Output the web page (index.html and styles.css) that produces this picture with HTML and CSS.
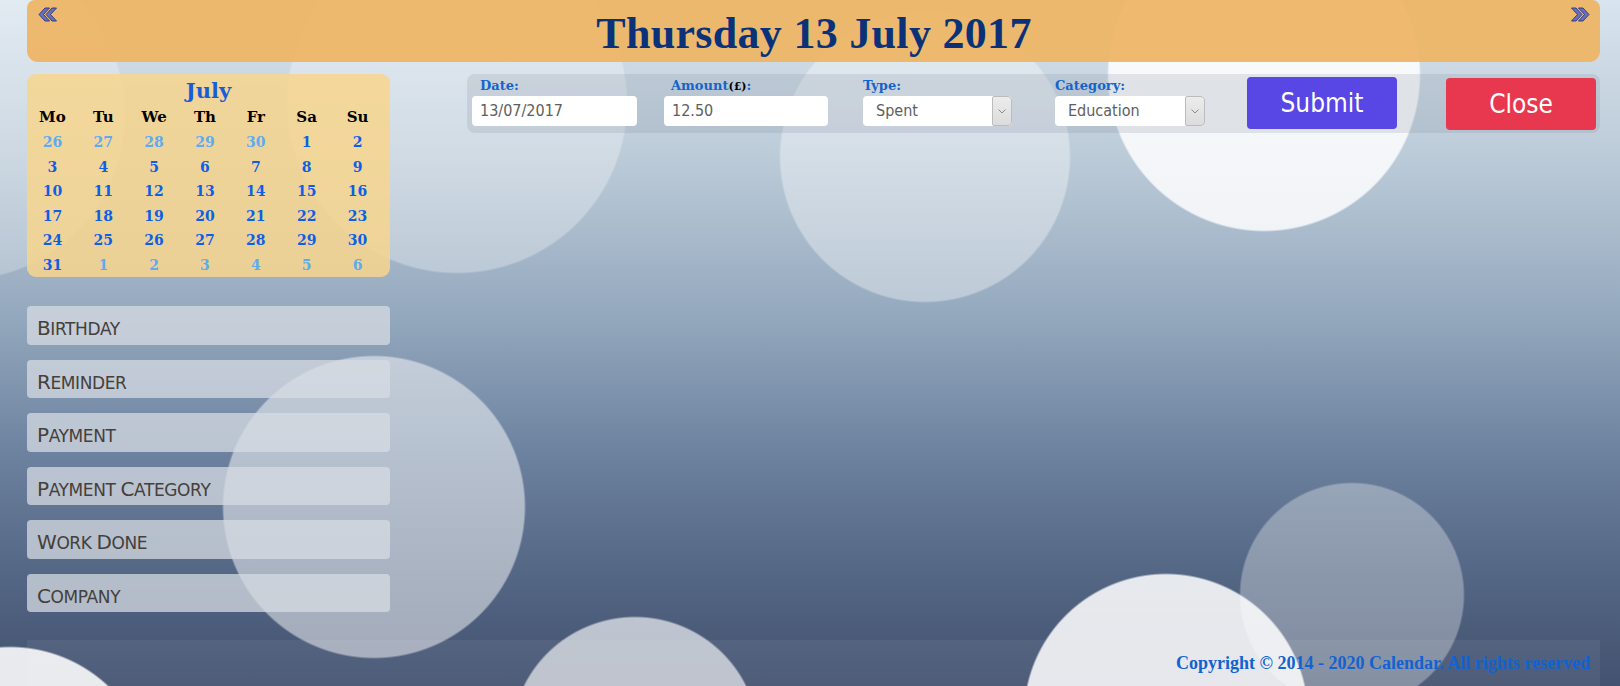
FILE: index.html
```html
<!DOCTYPE html>
<html lang="en">
<head>
<meta charset="utf-8">
<title>Calendar</title>
<link rel="stylesheet" href="styles.css">
</head>
<body>
<div class="page">
  <header class="topbar">
    <a class="nav" href="#" aria-label="Previous day">
      <svg width="20" height="16" viewBox="0 0 20 16"><path d="M1 7.5 L7 1 L11.5 1 L5.5 7.5 L11.5 14 L7 14 Z M8 7.5 L14 1 L18.5 1 L12.5 7.5 L18.5 14 L14 14 Z" fill="#6670c0" stroke="#2c3374" stroke-width="0.9" stroke-linejoin="round"/></svg>
    </a>
    <h1 class="title">Thursday 13 July 2017</h1>
    <a class="nav" href="#" aria-label="Next day">
      <svg width="20" height="16" viewBox="0 0 20 16"><path d="M19 7.5 L13 1 L8.5 1 L14.5 7.5 L8.5 14 L13 14 Z M12 7.5 L6 1 L1.5 1 L7.5 7.5 L1.5 14 L6 14 Z" fill="#6670c0" stroke="#2c3374" stroke-width="0.9" stroke-linejoin="round"/></svg>
    </a>
  </header>

  <div class="content">
    <aside class="sidebar">
      <div class="calendar">
        <div class="month">July</div>
        <table class="cal">
          <thead>
            <tr><th>Mo</th><th>Tu</th><th>We</th><th>Th</th><th>Fr</th><th>Sa</th><th>Su</th></tr>
          </thead>
          <tbody>
            <tr><td class="other">26</td><td class="other">27</td><td class="other">28</td><td class="other">29</td><td class="other">30</td><td>1</td><td>2</td></tr>
            <tr><td>3</td><td>4</td><td>5</td><td>6</td><td>7</td><td>8</td><td>9</td></tr>
            <tr><td>10</td><td>11</td><td>12</td><td>13</td><td>14</td><td>15</td><td>16</td></tr>
            <tr><td>17</td><td>18</td><td>19</td><td>20</td><td>21</td><td>22</td><td>23</td></tr>
            <tr><td>24</td><td>25</td><td>26</td><td>27</td><td>28</td><td>29</td><td>30</td></tr>
            <tr><td>31</td><td class="other">1</td><td class="other">2</td><td class="other">3</td><td class="other">4</td><td class="other">5</td><td class="other">6</td></tr>
          </tbody>
        </table>
      </div>

      <nav class="menu">
        <a class="menu-item" href="#"><span class="ini">B</span>irthday</a>
        <a class="menu-item" href="#"><span class="ini">R</span>eminder</a>
        <a class="menu-item" href="#"><span class="ini">P</span>ayment</a>
        <a class="menu-item" href="#"><span class="ini">P</span>ayment <span class="ini">C</span>ategory</a>
        <a class="menu-item" href="#"><span class="ini">W</span>ork <span class="ini">D</span>one</a>
        <a class="menu-item" href="#"><span class="ini">C</span>ompany</a>
      </nav>
    </aside>

    <main class="main">
      <form class="entry">
        <div class="field f-date">
          <label class="lbl lbl-date">Date:</label>
          <div class="input">13/07/2017</div>
        </div>
        <div class="field f-amount">
          <label class="lbl lbl-amount">Amount<span class="cur">(£)</span>:</label>
          <div class="input">12.50</div>
        </div>
        <div class="field f-type">
          <label class="lbl">Type:</label>
          <div class="select">
            <span class="sel-val">Spent</span>
            <span class="sel-btn"><svg width="8" height="5" viewBox="0 0 8 5"><path d="M0.5 0.5 L4 4 L7.5 0.5" fill="none" stroke="#8a8a8a" stroke-width="1"/></svg></span>
          </div>
        </div>
        <div class="field f-cat">
          <label class="lbl">Category:</label>
          <div class="select">
            <span class="sel-val">Education</span>
            <span class="sel-btn"><svg width="8" height="5" viewBox="0 0 8 5"><path d="M0.5 0.5 L4 4 L7.5 0.5" fill="none" stroke="#8a8a8a" stroke-width="1"/></svg></span>
          </div>
        </div>
        <div class="field f-submit">
          <button type="button" class="btn btn-submit">Submit</button>
        </div>
        <div class="field f-close">
          <button type="button" class="btn btn-close">Close</button>
        </div>
      </form>
    </main>
  </div>

  <footer class="footer">Copyright © 2014 - 2020 Calendar. All rights reserved</footer>
</div>
</body>
</html>
```

FILE: styles.css
```css
* { box-sizing: border-box; }

html, body { margin: 0; padding: 0; }

body {
  width: 1620px;
  height: 686px;
  overflow: hidden;
  font-family: "Liberation Serif", serif;
  background:
    radial-gradient(circle at 1264px 75px, rgba(255,255,255,.84) 155px, rgba(255,255,255,0) 157px),
    radial-gradient(circle at 1166px 716px, rgba(255,255,255,.86) 141px, rgba(255,255,255,0) 143px),
    radial-gradient(circle at 10px 790px, rgba(255,255,255,.88) 142px, rgba(255,255,255,0) 144px),
    radial-gradient(circle at 635px 741px, rgba(255,255,255,.64) 123px, rgba(255,255,255,0) 125px),
    radial-gradient(circle at 374px 507px, rgba(255,255,255,.5) 150px, rgba(255,255,255,0) 152px),
    radial-gradient(circle at 1352px 595px, rgba(255,255,255,.32) 111px, rgba(255,255,255,0) 113px),
    radial-gradient(circle at 925px 157px, rgba(255,255,255,.36) 144px, rgba(255,255,255,0) 146px),
    radial-gradient(circle at 457px 103px, rgba(255,255,255,.3) 169px, rgba(255,255,255,0) 171px),
    radial-gradient(circle at -40px 115px, rgba(255,255,255,.25) 164px, rgba(255,255,255,0) 166px),
    linear-gradient(to bottom, #d8e4ee 0%, #bdccd9 22%, #96aabf 45%, #6d829f 66%, #536683 84%, #435270 100%);
}

.page {
  height: 686px;
  padding: 0 20px 0 27px;
  display: flex;
  flex-direction: column;
}

/* ---------- header ---------- */
.topbar {
  height: 62px;
  flex: none;
  display: flex;
  justify-content: space-between;
  align-items: flex-start;
  padding: 7px 10px 0 11px;
  background: rgba(238,181,100,.93);
  border-radius: 8px 8px 11px 11px;
}

.nav { display: block; width: 20px; height: 16px; line-height: 0; }

.title {
  margin: 5px 0 0;
  font-family: "Liberation Serif", serif;
  font-weight: bold;
  font-size: 44px;
  line-height: 44px;
  color: #0b3279;
  letter-spacing: 0.3px;
}

/* ---------- layout ---------- */
.content {
  flex: 1;
  display: flex;
  gap: 77px;
  padding-top: 12px;
}

.sidebar { width: 363px; flex: none; }

.main { flex: 1; }

/* ---------- calendar ---------- */
.calendar {
  height: 203px;
  padding-top: 4px;
  background: rgba(247,213,142,.86);
  border-radius: 9px;
  font-family: "DejaVu Serif", serif;
}

.month {
  height: 26px;
  text-align: center;
  font-size: 21px;
  line-height: 26px;
  font-weight: bold;
  color: #1a5cd8;
}

.cal {
  width: 356px;
  border-collapse: collapse;
  table-layout: fixed;
}

.cal th {
  height: 26px;
  padding: 0;
  font-size: 15px;
  font-weight: bold;
  color: #000;
  text-align: center;
}

.cal td {
  height: 24.5px;
  padding: 0;
  font-size: 14px;
  font-weight: bold;
  color: #0e5fe6;
  text-align: center;
}

.cal td.other { color: #5eabf0; }

/* ---------- menu ---------- */
.menu {
  margin-top: 29px;
  display: flex;
  flex-direction: column;
  gap: 15px;
}

.menu-item {
  display: block;
  height: 38.5px;
  padding: 8px 0 0 10px;
  background: rgba(215,220,226,.74);
  border-radius: 4px;
  font-family: "DejaVu Sans", sans-serif;
  text-transform: uppercase;
  font-size: 17px;
  line-height: 28px;
  color: #45403b;
  text-decoration: none;
  letter-spacing: -0.4px;
}

.ini { font-size: 20px; }

/* ---------- form ---------- */
.entry {
  display: flex;
  align-items: flex-start;
  height: 59px;
  padding: 4px 4px 0 5px;
  background: rgba(120,135,150,.18);
  border-radius: 8px;
}

.field { flex: none; display: flex; flex-direction: column; }
.f-date { width: 192px; }
.f-amount { width: 199px; }
.f-type { width: 192px; }
.f-cat { width: 192px; }
.f-submit { width: 199px; }
.f-close { width: 150px; }

.lbl {
  height: 16px;
  font-family: "DejaVu Serif", serif;
  font-weight: bold;
  font-size: 13px;
  line-height: 16px;
  color: #1464cc;
  margin-bottom: 2px;
  white-space: nowrap;
}
.lbl-date { padding-left: 8px; }
.lbl-amount { padding-left: 7px; }
.cur { color: #000; font-size: 11px; }

.input, .select {
  height: 30px;
  background: #fff;
  border-radius: 4px;
  font-family: "DejaVu Sans Condensed", "DejaVu Sans", sans-serif;
  font-size: 16px;
  line-height: 30px;
  color: #5e5e5e;
}

.f-date .input { width: 165px; padding-left: 8px; }
.f-amount .input { width: 164px; padding-left: 8px; }

.select { display: flex; }
.f-type .select { width: 149px; }
.f-cat .select { width: 150px; }

.sel-val { flex: 1; padding-left: 13px; }

.sel-btn {
  width: 20px;
  display: flex;
  align-items: center;
  justify-content: center;
  background: linear-gradient(#ececec, #dcdcdc);
  border: 1px solid #bcbcbc;
  border-radius: 2px 4px 4px 2px;
}

.btn {
  height: 52px;
  border: none;
  border-radius: 4px;
  margin-top: -1px;
  font-family: "DejaVu Sans Condensed", "DejaVu Sans", sans-serif;
  font-size: 26px;
  color: #fff;
  cursor: pointer;
}

.btn-submit { width: 150px; background: #5847e4; }
.btn-close { width: 150px; background: #e8384f; margin-top: 0; }

/* ---------- footer ---------- */
.footer {
  flex: none;
  height: 46px;
  padding: 13px 10px 0 0;
  text-align: right;
  background: rgba(255,255,255,.06);
  font-family: "Liberation Serif", serif;
  font-weight: bold;
  font-size: 18px;
  line-height: 20px;
  color: #1262cf;
}
```
